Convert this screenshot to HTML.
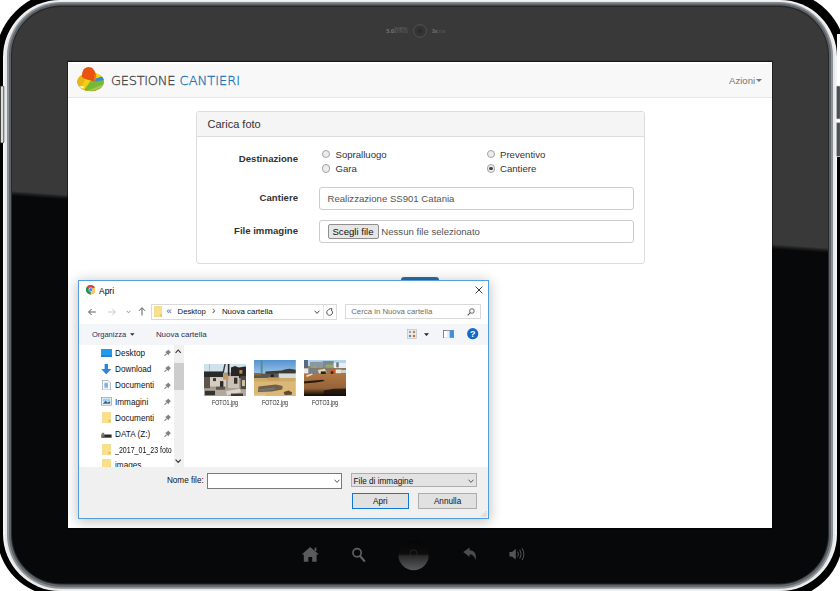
<!DOCTYPE html>
<html lang="it">
<head>
<meta charset="utf-8">
<title>Gestione Cantieri</title>
<style>
html,body{margin:0;padding:0;}
body{width:840px;height:591px;overflow:hidden;background:#fff;position:relative;font-family:"Liberation Sans",Arial,sans-serif;color:#333;}
.abs{position:absolute;}
#frame{position:absolute;left:0;top:0;width:840px;height:591px;}
#screen{position:absolute;left:68px;top:62px;width:704px;height:465.8px;background:#fff;overflow:hidden;}
/* coordinates inside #screen are page coords minus (68,62) */
.navbar{position:absolute;left:0;top:2.2px;width:704px;height:33.6px;background:#f8f8f8;border-bottom:1px solid #e7e7e7;box-sizing:border-box;}
.brand{position:absolute;left:43px;top:10.7px;font-family:"DejaVu Sans Light","DejaVu Sans",sans-serif;font-weight:200;font-size:13px;line-height:16px;white-space:nowrap;color:#474747;letter-spacing:-.3px;-webkit-text-stroke:.3px #474747;}
.brand b{position:absolute;left:68.6px;top:0;font-weight:200;color:#1c74b8;letter-spacing:0;-webkit-text-stroke:.3px #1c74b8;}
.azioni{position:absolute;left:661px;top:12.5px;font-size:9.6px;line-height:12px;color:#777;white-space:nowrap;}
.caret{display:inline-block;width:0;height:0;border-left:3px solid transparent;border-right:3px solid transparent;border-top:3px solid #777;vertical-align:middle;margin-left:1px;}
.panel{position:absolute;left:128px;top:49px;width:449px;height:153px;box-sizing:border-box;border:1px solid #ddd;border-radius:3px;background:#fff;}
.panel-h{height:23.8px;background:#f5f5f5;border-bottom:1px solid #ddd;border-radius:2px 2px 0 0;}
.panel-t{position:absolute;left:10.5px;top:6px;font-size:11px;line-height:13px;color:#333;}
.lbl{position:absolute;width:120px;text-align:right;font-weight:bold;font-size:9.6px;line-height:12px;color:#333;white-space:nowrap;}
.rad{position:absolute;width:8.6px;height:8.6px;margin:-.3px 0 0 -.3px;box-sizing:border-box;border:1px solid #a3a3a3;border-radius:50%;background:#ececec;}
.rad.on::after{content:"";position:absolute;left:1.7px;top:1.7px;width:3.2px;height:3.2px;border-radius:50%;background:#444;}
.rl{position:absolute;font-size:9.6px;line-height:12px;color:#333;white-space:nowrap;}
.inp{position:absolute;left:250.5px;width:315px;height:23px;box-sizing:border-box;border:1px solid #ccc;border-radius:3px;background:#fff;font-size:9.6px;line-height:21px;color:#555;padding-left:8px;white-space:nowrap;}
.fbtn{position:absolute;left:8px;top:3.5px;width:51px;height:15px;box-sizing:border-box;border:1px solid #8f8f8f;border-radius:2px;background:#e6e6e6;color:#111;font-size:9.6px;line-height:13px;text-align:center;}
.submit{position:absolute;left:333px;top:214.5px;width:38px;height:24px;background:#2d6da3;border-radius:3px;}

/* ---- file dialog ---- (children coords = page coords minus (79,281)) */
.dlg{position:absolute;left:10px;top:218px;width:411px;height:238.6px;box-sizing:border-box;border:1px solid #549fdb;background:#fff;box-shadow:0 2px 12px 1px rgba(0,0,0,.24);font-size:8.2px;line-height:10px;color:#111;}
.dlg div,.dlg span,.dlg svg{position:absolute;white-space:nowrap;}
.dlg .tb{left:0;top:42.5px;width:409px;height:21px;background:#f3f5f8;}
.dlg .ft{left:0;top:186px;width:409px;height:51px;background:#f0f0f0;}
.dlg .box{box-sizing:border-box;border:1px solid #d9d9d9;background:#fff;}
.dlg .sb{left:94.5px;top:64px;width:10px;height:122px;background:#f0f0f0;}
.dlg .th{left:94.5px;top:81.5px;width:10px;height:27.5px;background:#cdcdcd;}
.dlg .row{left:36px;font-size:8.2px;line-height:10px;color:#111;}
.dlg .fl{font-size:6.6px;line-height:8px;width:44px;text-align:center;color:#1a1a1a;transform:scaleX(.8);}
.dlg .btn{box-sizing:border-box;border:1px solid #adadad;background:#e1e1e1;text-align:center;height:15.6px;line-height:15.4px;}
</style>
</head>
<body>
<svg id="frame" viewBox="0 0 840 591">
  <defs>
    <clipPath id="bez"><rect x="12" y="7" width="816" height="576.5" rx="49" ry="49"/></clipPath>
    <linearGradient id="glare" gradientUnits="userSpaceOnUse" x1="0" y1="190" x2="-0.35" y2="195">
      <stop offset="0" stop-color="#393939"/><stop offset=".55" stop-color="#1a1a1b"/><stop offset="1" stop-color="#07080a"/>
    </linearGradient>
  </defs>
  <!-- black fringe -->
  <path d="M-5 61 A70 70 0 0 1 65 -9 L780 -9 A66 66 0 0 1 846 57 L843 537 A62 62 0 0 1 781 599 L59 596 A62 62 0 0 1 -3 534 Z" fill="#000"/>
  <!-- rim -->
  <rect x="3" y="0" width="834" height="591" rx="57" ry="57" fill="#f2f3f3"/>
  <rect x="5" y="1" width="830" height="589.2" rx="55.5" ry="55.5" fill="#e6e8e9"/>
  <rect x="7" y="2" width="826" height="586.8" rx="54" ry="54" fill="#8a9095"/>
  <rect x="9" y="3.5" width="822" height="583.3" rx="52" ry="52" fill="#5d6368"/>
  <rect x="11" y="5.5" width="818" height="579" rx="50" ry="50" fill="#26282a"/>
  <!-- bezel -->
  <g clip-path="url(#bez)">
    <rect x="0" y="0" width="840" height="591" fill="url(#glare)"/>
  </g>
  <rect x="67.2" y="60.8" width="705.6" height="468.6" fill="#000" fill-opacity=".55"/>

  <!-- side buttons -->
  <rect x="837" y="34" width="4" height="123" fill="#fff"/>
  <rect x="0.4" y="86" width="3.4" height="57" rx="1" fill="#dcdddd" stroke="#2a2a2a" stroke-width=".8"/>
  <rect x="836.4" y="86" width="4" height="33" rx="1" fill="#4b4f53" stroke="#c9c9c9" stroke-width=".6"/>
  <rect x="836.4" y="122.6" width="4" height="34" rx="1" fill="#4b4f53" stroke="#c9c9c9" stroke-width=".6"/>
  <!-- camera -->
  <defs>
    <linearGradient id="hb" x1="0" y1="0" x2="0" y2="1"><stop offset="0" stop-color="#050505"/><stop offset=".46" stop-color="#0c0c0c"/><stop offset=".54" stop-color="#2b2b2b"/><stop offset="1" stop-color="#5a5a5a"/></linearGradient>
  </defs>
  <circle cx="420" cy="31" r="6.3" fill="#343434" stroke="#585858" stroke-width=".8"/>
  <circle cx="420" cy="31" r="2.2" fill="#2c2c2c"/>
  <text x="386.2" y="33.2" font-family="Liberation Sans,Arial,sans-serif" font-weight="bold" font-size="5.8" fill="#777">5.0</text>
  <text x="394.6" y="30.2" font-family="Liberation Sans,Arial,sans-serif" font-size="2.9" fill="#6e6e6e" textLength="13" lengthAdjust="spacingAndGlyphs">MEGAPIXEL</text>
  <text x="394.6" y="33.2" font-family="Liberation Sans,Arial,sans-serif" font-size="2.9" fill="#6e6e6e" textLength="13" lengthAdjust="spacingAndGlyphs">AUTOFOCUS</text>
  <text x="432" y="33.2" font-family="Liberation Sans,Arial,sans-serif" font-weight="bold" font-size="5" fill="#727272">3x</text>
  <text x="438.2" y="33.2" font-family="Liberation Sans,Arial,sans-serif" font-size="3" fill="#666" textLength="7" lengthAdjust="spacingAndGlyphs">ZOOM</text>
  <!-- bottom buttons -->
  <circle cx="413.6" cy="555" r="15.2" fill="url(#hb)"/>
  <circle cx="413.6" cy="553.4" r="3.6" fill="none" stroke="#2a2a2a" stroke-width=".8"/>
  <g fill="#5a5a5a">
    <path d="M310.2 547 L319 554.6 H316.6 V561.8 H312.2 V557 H308.4 V561.8 H303.8 V554.6 H301.6 Z"/>
    <rect x="314.6" y="547.6" width="1.8" height="3.4"/>
  </g>
  <circle cx="357.1" cy="552.8" r="4.1" fill="none" stroke="#606060" stroke-width="1.7"/>
  <path d="M360.2 556.2 L364.4 561" stroke="#606060" stroke-width="2.1" stroke-linecap="round"/>
  <path d="M463.2 552 L469.6 547.4 V550.2 C474.6 550.4 476.6 554 475.6 560 C474.6 556.6 473 554.4 469.6 554.2 V557 Z" fill="#4c4c4c"/>
  <path d="M509.4 552 H512 L515.8 548.8 V559.6 L512 556.4 H509.4 Z" fill="#555"/>
  <path d="M517.6 551.6 Q519.4 554.2 517.6 556.8 M519.8 549.8 Q522.6 554.2 519.8 558.6 M522 548.2 Q525.8 554.2 522 560.2" stroke="#555" stroke-width="1" fill="none"/>
</svg>

<div id="screen">
  <div class="navbar"></div>

  <svg class="abs" style="left:8px;top:3.6px;" width="30" height="27" viewBox="0 0 30 27">
    <defs><clipPath id="lg"><ellipse cx="14.6" cy="15.5" rx="13.2" ry="9.2" transform="rotate(-1 14.6 15.5)"/></clipPath></defs>
    <ellipse cx="14.7" cy="16" rx="13.3" ry="9.3" transform="rotate(-1 14.7 16)" fill="#b98a2c"/>
    <g clip-path="url(#lg)">
      <rect x="0" y="0" width="30" height="27" fill="#f5cf12"/>
      <path d="M0 6 L12 8 L6 20 L0 20 Z" fill="#e9b416"/>
      <path d="M15.6 13.6 L30 10.4 V27 H6 Z" fill="#78b832"/>
      <path d="M14.6 14.2 L30 9 V13.6 L20 15.4 Z" fill="#2f8fd6"/>
      <path d="M8 26 L28 18 L28 21 L12 27 Z" fill="#a7cf5a" opacity=".8"/>
      <path d="M2 20 L8 20.6 L7.4 22.6 L3 22 Z" fill="#fff6c8"/>
    </g>
    <path d="M6 11.2 C5.6 4.6 8.6 1 12.4 1 C16.6 1 19.4 4.4 20 10 L20.2 14.4 C17 15.4 9.6 13.6 6 11.2 Z" fill="#e9530f"/>
    <path d="M18 8 L20 10 L20.2 14.4 L18.2 14.6 Z" fill="#ef7a28"/>
  </svg>
  <div class="brand">GESTIONE <b>CANTIERI</b></div>
  <div class="azioni">Azioni<span class="caret"></span></div>

  <div class="panel">
    <div class="panel-h"></div>
    <div class="panel-t">Carica foto</div>
  </div>
  <div class="lbl" style="left:110px;top:91px;">Destinazione</div>
  <div class="lbl" style="left:110px;top:129.9px;">Cantiere</div>
  <div class="lbl" style="left:110px;top:162.9px;">File immagine</div>

  <div class="rad" style="left:254px;top:88px;"></div><div class="rl" style="left:267.5px;top:86.5px;">Sopralluogo</div>
  <div class="rad" style="left:254px;top:102.5px;"></div><div class="rl" style="left:267.5px;top:101px;">Gara</div>
  <div class="rad" style="left:419px;top:88px;"></div><div class="rl" style="left:432px;top:86.5px;">Preventivo</div>
  <div class="rad on" style="left:419px;top:102.5px;"></div><div class="rl" style="left:432px;top:101px;">Cantiere</div>

  <div class="inp" style="top:124.7px;">Realizzazione SS901 Catania</div>
  <div class="inp" style="top:157.7px;"><div class="fbtn">Scegli file</div><span style="position:absolute;left:61.8px;top:0;">Nessun file selezionato</span></div>
  <div class="submit"></div>

  <div class="dlg">
    <!-- title -->
    <svg style="left:6.9px;top:4.2px;" width="9.4" height="9.4" viewBox="0 0 20 20">
      <circle cx="10" cy="10" r="10" fill="#db4437"/>
      <path d="M10 10 L1.3 5 A10 10 0 0 0 10 20 Z" fill="#0f9d58"/>
      <path d="M10 10 L10 20 A10 10 0 0 0 18.7 5 Z" fill="#ffcd40"/>
      <path d="M10 10 L18.7 5 A10 10 0 0 0 1.3 5 Z" fill="#db4437"/>
      <circle cx="10" cy="10" r="4.6" fill="#fff"/>
      <circle cx="10" cy="10" r="3.6" fill="#4285f4"/>
    </svg>
    <span style="left:20.1px;top:4.9px;font-size:8.4px;color:#000;">Apri</span>
    <svg style="left:395.6px;top:5px;" width="8" height="8" viewBox="0 0 8 8"><path d="M.6.6 L7.4 7.4 M7.4.6 L.6 7.4" stroke="#222" stroke-width="0.9" fill="none"/></svg>
    <!-- nav row -->
    <svg style="left:9px;top:26.5px;" width="8" height="8" viewBox="0 0 8 8"><path d="M7.8 4 H.8 M3.6 1 L.6 4 L3.6 7" stroke="#5a5a5a" stroke-width="1" fill="none"/></svg>
    <svg style="left:29px;top:26.5px;" width="8" height="8" viewBox="0 0 8 8"><path d="M.2 4 H7.2 M4.4 1 L7.4 4 L4.4 7" stroke="#c9c9c9" stroke-width="1" fill="none"/></svg>
    <svg style="left:46.6px;top:29px;" width="5" height="4" viewBox="0 0 5 4"><path d="M.6.8 L2.5 2.8 L4.4.8" stroke="#8a8a8a" stroke-width=".9" fill="none"/></svg>
    <svg style="left:58.7px;top:26.4px;" width="8" height="8.6" viewBox="0 0 8 8.6"><path d="M4 8.4 V.9 M1 3.8 L4 .7 L7 3.8" stroke="#5a5a5a" stroke-width="1" fill="none"/></svg>
    <div class="box" style="left:71.5px;top:23px;width:186px;height:15.5px;"></div>
    <svg style="left:74.6px;top:24.6px;" width="8.8" height="11.4" viewBox="0 0 8.8 11.4"><path d="M.3 .3 H8.5 V11.1 H.3 Z" fill="#fbe08a" stroke="#e9c765" stroke-width=".5"/><path d="M6.4 8 H8.5 V11.1 H6.4 Z" fill="#e9c45c"/></svg>
    <span style="left:87.6px;top:25.2px;font-size:9.5px;color:#555;">«</span>
    <span style="left:98.6px;top:26.2px;font-size:7.7px;">Desktop</span>
    <span style="left:133px;top:25px;font-size:10px;color:#444;">›</span>
    <span style="left:142.9px;top:26.2px;font-size:7.95px;">Nuova cartella</span>
    <svg style="left:235.4px;top:28.6px;" width="6" height="4.4" viewBox="0 0 6 4.4"><path d="M.5.7 L3 3.4 L5.5.7" stroke="#444" stroke-width="1" fill="none"/></svg>
    <div style="left:244px;top:24px;width:1px;height:13.5px;background:#e3e3e3;"></div>
    <svg style="left:247.2px;top:26.6px;" width="7.4" height="8" viewBox="0 0 7.4 8"><path d="M5.9 2.6 A2.9 2.9 0 1 1 3.7 1.5" stroke="#444" stroke-width=".9" fill="none"/><path d="M3.3 .2 L5.8 .4 L5.5 2.9" stroke="#444" stroke-width=".9" fill="none"/></svg>
    <div class="box" style="left:265.7px;top:23px;width:136px;height:15.3px;"></div>
    <span style="left:272.2px;top:26.2px;font-size:7.8px;color:#6d6d6d;">Cerca in Nuova cartella</span>
    <svg style="left:387.6px;top:26.6px;" width="8" height="8" viewBox="0 0 8 8"><circle cx="4.9" cy="3" r="2.3" stroke="#555" stroke-width=".9" fill="none"/><path d="M3.3 4.7 L.7 7.4" stroke="#555" stroke-width="1.1"/></svg>
    <!-- toolbar -->
    <div class="tb"></div>
    <span style="left:12.9px;top:49px;font-size:7.5px;color:#1e3257;">Organizza</span>
    <svg style="left:51.4px;top:51.6px;" width="4.6" height="3" viewBox="0 0 4.6 3"><path d="M0 .2 H4.6 L2.3 2.8 Z" fill="#1e3257"/></svg>
    <span style="left:76.9px;top:49px;font-size:7.95px;color:#1e3257;">Nuova cartella</span>
    <svg style="left:327.6px;top:48.2px;" width="10" height="10" viewBox="0 0 10 10"><rect x=".4" y=".4" width="9.2" height="9.2" fill="#f4f4f4" stroke="#b5b5b5" stroke-width=".6"/><rect x="1.8" y="1.8" width="2.4" height="2.4" fill="#9aa7b5"/><rect x="5.8" y="1.8" width="2.4" height="2.4" fill="#b9894f"/><rect x="1.8" y="5.8" width="2.4" height="2.4" fill="#6b8fb9"/><rect x="5.8" y="5.8" width="2.4" height="2.4" fill="#c96a4a"/></svg>
    <svg style="left:345.2px;top:52px;" width="5" height="3" viewBox="0 0 5 3"><path d="M0 .2 H5 L2.5 2.9 Z" fill="#222"/></svg>
    <svg style="left:364.4px;top:48.6px;" width="11" height="8.6" viewBox="0 0 11 8.6"><rect x=".4" y=".4" width="10.2" height="7.8" fill="#fff" stroke="#5f6f84" stroke-width=".8"/><rect x="3.8" y=".8" width="2.6" height="7" fill="#e6eef8"/><rect x="6.6" y=".8" width="3.8" height="7" fill="#3f8fe0"/></svg>
    <svg style="left:388.4px;top:47.4px;" width="11.4" height="11.4" viewBox="0 0 11.4 11.4"><circle cx="5.7" cy="5.7" r="5.6" fill="#1668c9"/><text x="5.7" y="8.9" text-anchor="middle" font-family="Liberation Sans,Arial,sans-serif" font-weight="bold" font-size="9" fill="#fff">?</text></svg>
    <!-- sidebar -->
    <div class="sb"></div><div class="th"></div>
    <svg style="left:96.4px;top:68.2px;" width="6.4" height="4.4" viewBox="0 0 6.4 4.4"><path d="M.6 3.8 L3.2 1 L5.8 3.8" stroke="#333" stroke-width="1.1" fill="none"/></svg>
    <svg style="left:96.4px;top:177.6px;" width="6.4" height="4.4" viewBox="0 0 6.4 4.4"><path d="M.6.6 L3.2 3.4 L5.8.6" stroke="#333" stroke-width="1.1" fill="none"/></svg>
    <div style="left:0;top:64px;width:94px;height:122px;overflow:hidden;"><div style="left:0;top:-64px;width:94px;height:200px;">
    <svg style="left:21.9px;top:67.6px;" width="11" height="8.4" viewBox="0 0 11 8.4"><rect x="0" y="0" width="11" height="7.6" fill="#1d9cf0"/><rect x="0" y="6.6" width="11" height="1.2" fill="#0f72c4"/><rect x="3.5" y="7.6" width="4" height=".8" fill="#6a7f95"/></svg>
    <span class="row" style="top:67.9px;">Desktop</span>
    <svg style="left:84.6px;top:68.2px;" width="7.4" height="7.4" viewBox="0 0 6.6 6.6"><path d="M3.6 .4 L6.2 3 L5.4 3.3 L4.3 4.6 L4.2 5.8 L.9 2.4 L2.1 2.3 L3.3 1.2 Z" fill="#808080"/><path d="M2.4 4.2 L.4 6.2" stroke="#808080" stroke-width=".9"/></svg>
    <svg style="left:22.4px;top:82.6px;" width="10.6" height="10.6" viewBox="0 0 10.6 10.6"><path d="M3.6 0 H7 V5 H10.4 L5.3 10.4 L.2 5 H3.6 Z" fill="#2d86d9"/></svg>
    <span class="row" style="top:84.1px;">Download</span>
    <svg style="left:84.6px;top:84.4px;" width="7.4" height="7.4" viewBox="0 0 6.6 6.6"><path d="M3.6 .4 L6.2 3 L5.4 3.3 L4.3 4.6 L4.2 5.8 L.9 2.4 L2.1 2.3 L3.3 1.2 Z" fill="#808080"/><path d="M2.4 4.2 L.4 6.2" stroke="#808080" stroke-width=".9"/></svg>
    <svg style="left:23px;top:98.8px;" width="8.8" height="10.4" viewBox="0 0 8.8 10.4"><path d="M.4 .4 H6 L8.4 2.8 V10 H.4 Z" fill="#fdfdfd" stroke="#8c9aa8" stroke-width=".7"/><rect x="2.4" y="2.6" width="3.6" height="5.6" fill="#9cc3ea"/><path d="M2.4 4.2 H6 M2.4 6 H6" stroke="#5d8fc4" stroke-width=".6"/></svg>
    <span class="row" style="top:100.3px;">Documenti</span>
    <svg style="left:84.6px;top:100.6px;" width="7.4" height="7.4" viewBox="0 0 6.6 6.6"><path d="M3.6 .4 L6.2 3 L5.4 3.3 L4.3 4.6 L4.2 5.8 L.9 2.4 L2.1 2.3 L3.3 1.2 Z" fill="#808080"/><path d="M2.4 4.2 L.4 6.2" stroke="#808080" stroke-width=".9"/></svg>
    <svg style="left:21.9px;top:116.1px;" width="10.8" height="8.6" viewBox="0 0 10.8 8.6"><rect x=".4" y=".4" width="10" height="7.8" fill="#f4f8fc" stroke="#8d9aa6" stroke-width=".7"/><rect x="1.6" y="1.6" width="7.6" height="3" fill="#9fd0f5"/><path d="M1.6 6.8 L4.6 3.8 L6.4 5.4 L9.2 4.2 V6.8 Z" fill="#3c5f86"/></svg>
    <span class="row" style="top:116.6px;">Immagini</span>
    <svg style="left:84.6px;top:116.9px;" width="7.4" height="7.4" viewBox="0 0 6.6 6.6"><path d="M3.6 .4 L6.2 3 L5.4 3.3 L4.3 4.6 L4.2 5.8 L.9 2.4 L2.1 2.3 L3.3 1.2 Z" fill="#808080"/><path d="M2.4 4.2 L.4 6.2" stroke="#808080" stroke-width=".9"/></svg>
    <svg style="left:23px;top:131.1px;" width="8.8" height="10.8" viewBox="0 0 8.8 10.8"><path d="M.3 .3 H8.5 V10.5 H.3 Z" fill="#fbe08a" stroke="#ecca6a" stroke-width=".5"/><path d="M6.4 7.6 H8.5 V10.5 H6.4 Z" fill="#e9c45c"/></svg>
    <span class="row" style="top:132.8px;">Documenti</span>
    <svg style="left:84.6px;top:133.1px;" width="7.4" height="7.4" viewBox="0 0 6.6 6.6"><path d="M3.6 .4 L6.2 3 L5.4 3.3 L4.3 4.6 L4.2 5.8 L.9 2.4 L2.1 2.3 L3.3 1.2 Z" fill="#808080"/><path d="M2.4 4.2 L.4 6.2" stroke="#808080" stroke-width=".9"/></svg>
    <svg style="left:21.6px;top:150.5px;" width="11" height="6" viewBox="0 0 11 6"><path d="M.3 2.4 L1.4 .8 H3.2 V2.4 Z" fill="#7a7a7a"/><rect x=".3" y="2.4" width="10.4" height="3.4" fill="#4d4d4d"/><rect x="4" y="3.2" width="6" height="1.6" fill="#1e1e1e"/><rect x="1.2" y="3.4" width="1.4" height="1" fill="#8fd14f"/></svg>
    <span class="row" style="top:148.8px;">DATA (Z:)</span>
    <svg style="left:84.6px;top:149.1px;" width="7.4" height="7.4" viewBox="0 0 6.6 6.6"><path d="M3.6 .4 L6.2 3 L5.4 3.3 L4.3 4.6 L4.2 5.8 L.9 2.4 L2.1 2.3 L3.3 1.2 Z" fill="#808080"/><path d="M2.4 4.2 L.4 6.2" stroke="#808080" stroke-width=".9"/></svg>
    <svg style="left:23px;top:162.8px;" width="8.8" height="10.8" viewBox="0 0 8.8 10.8"><path d="M.3 .3 H8.5 V10.5 H.3 Z" fill="#fbe08a" stroke="#ecca6a" stroke-width=".5"/><path d="M6.4 7.6 H8.5 V10.5 H6.4 Z" fill="#e9c45c"/></svg>
    <span class="row" style="top:164.5px;transform:scaleX(.86);transform-origin:0 50%;">_2017_01_23 foto</span>
    <svg style="left:23px;top:178.2px;" width="8.8" height="10.8" viewBox="0 0 8.8 10.8"><path d="M.3 .3 H8.5 V10.5 H.3 Z" fill="#fbe08a" stroke="#ecca6a" stroke-width=".5"/><path d="M6.4 7.6 H8.5 V10.5 H6.4 Z" fill="#e9c45c"/></svg>
    <span class="row" style="top:179.9px;">images</span>
    </div></div>

    <svg style="left:124.6px;top:82.7px;" width="42.4" height="32.2" viewBox="0 0 42.4 32" preserveAspectRatio="none">
      <defs><filter id="bl" x="-5%" y="-5%" width="110%" height="110%"><feGaussianBlur stdDeviation=".45"/></filter><clipPath id="c1"><rect width="42.4" height="32"/></clipPath></defs>
      <g clip-path="url(#c1)"><g filter="url(#bl)">
      <rect x="-2" y="-2" width="46.4" height="36" fill="#a29b8f"/>
      <rect x="-2" y="-2" width="46.4" height="10.4" fill="#cfe2ec"/>
      <rect x="-2" y="7.4" width="21" height="6" fill="#2c2b2b"/>
      <path d="M27 3.4 L31 2 L35 3.6 L41 2.4 L44 3 V14 H27 Z" fill="#2a2827"/>
      <rect x="35.4" y="6" width="3" height="3.6" fill="#b98a55"/>
      <path d="M20.6 -1 H22 L19.8 9 H18.4 Z" fill="#3a3836"/>
      <rect x="23.8" y="-1" width="1.6" height="13" fill="#232221"/>
      <rect x="5" y="-1" width=".7" height="8" fill="#9fb3bd"/>
      <rect x="0" y="13" width="6" height="11" fill="#5b5750"/>
      <rect x="6" y="13" width="16" height="9.4" fill="#d6cdbf"/>
      <rect x="24" y="12" width="11" height="12" fill="#cbc2b4"/>
      <rect x="19" y="10.6" width="5.4" height="5" fill="#c49a62"/>
      <rect x="16" y="17" width="3.4" height="6" fill="#2c2b2a"/>
      <rect x="9" y="14" width="3" height="3" fill="#3a3836"/>
      <rect x="30" y="13.6" width="3.4" height="6" fill="#34322f"/>
      <rect x="36.6" y="12" width="6" height="18" fill="#4d4842"/>
      <rect x="38" y="16" width="3" height="6" fill="#c9bfae"/>
      <rect x="-2" y="25" width="46" height="9" fill="#b0a89b"/>
      <rect x="1" y="26.6" width="10" height="4.4" fill="#353331"/>
      <path d="M22 27 L36 24.6 L37 28 L23 31 Z" fill="#ded6ca"/>
      <rect x="12" y="22.6" width="9" height="3" fill="#5b564f"/>
      <rect x="27" y="29.4" width="12" height="2.6" fill="#3c3936"/>
      </g></g>
    </svg>
    <svg style="left:175.1px;top:79.1px;" width="41.8" height="36" viewBox="0 0 42.3 36" preserveAspectRatio="none">
      <defs><linearGradient id="sky2" x1="0" y1="0" x2="0" y2="1"><stop offset="0" stop-color="#4a8bcf"/><stop offset="1" stop-color="#9cc4e4"/></linearGradient><clipPath id="c2"><rect width="42.3" height="36"/></clipPath></defs>
      <g clip-path="url(#c2)"><g filter="url(#bl)">
      <rect x="-2" y="-2" width="46.3" height="40" fill="#dcb877"/>
      <rect x="-2" y="-2" width="46.3" height="16" fill="url(#sky2)"/>
      <rect x="6.8" y="-1" width="1.9" height="14.6" fill="#4f8f9a"/><rect x="7.2" y="2" width="1.1" height="1.4" fill="#c8574a"/><rect x="7.2" y="7" width="1.1" height="1.4" fill="#c8574a"/>
      <path d="M11.6 11.4 L28 10.6 L31 9.4 L36 8.8 L44 10 V15 H11.6 Z" fill="#3b3a30"/>
      <rect x="-2" y="13.6" width="28" height="4.6" fill="#5a5955"/>
      <rect x="-2" y="13" width="9" height="2.4" fill="#8b6a3c"/>
      <rect x="25" y="13.4" width="19" height="5.6" fill="#d6dbe0"/>
      <rect x="17" y="14.4" width="3" height="2.6" fill="#1f1e1c"/>
      <rect x="-2" y="18" width="46.3" height="3.4" fill="#cfa968"/>
      <rect x="14" y="17.4" width="12" height="3" fill="#c79f5c"/>
      <path d="M4.6 26.6 L22 24.6 L29 26 L28.6 29.6 L18 31.6 L4 32 Z" fill="#6f5f49"/>
      <path d="M5 29.2 L21 27.4 L21.4 29.6 L5.4 31.4 Z" fill="#70757a"/>
      <path d="M30 32 L35 30.6 L38.6 32.4 L38 34.8 L31 35 Z" fill="#5e4a30"/>
      <rect x="-2" y="34.4" width="14" height="3" fill="#e6c98f"/>
      </g></g>
    </svg>
    <svg style="left:225.1px;top:78.9px;" width="42" height="36" viewBox="0 0 42.4 36" preserveAspectRatio="none">
      <defs><linearGradient id="gr3" x1="0" y1="0" x2="0" y2="1"><stop offset="0" stop-color="#b07a44"/><stop offset=".42" stop-color="#ad7642"/><stop offset=".76" stop-color="#94623a"/><stop offset=".86" stop-color="#4a2e18"/><stop offset=".92" stop-color="#17100c"/><stop offset="1" stop-color="#0f0b09"/></linearGradient><clipPath id="c3"><rect width="42.4" height="36"/></clipPath></defs>
      <g clip-path="url(#c3)"><g filter="url(#bl)">
      <rect x="-2" y="-2" width="46.4" height="40" fill="url(#gr3)"/>
      <rect x="-2" y="-2" width="46.4" height="8" fill="#b4d6ee"/>
      <rect x="-2" y="-2" width="6" height="11" fill="#596a80"/>
      <rect x="6" y="1.8" width="13" height="6.6" fill="#8d97a3"/>
      <rect x="19" y="1" width="11" height="7" fill="#7f8890"/>
      <rect x="9" y="5.4" width="3" height="2.6" fill="#8fae5c"/><rect x="22" y="4.6" width="8" height="3" fill="#93ac6a"/>
      <rect x="30" y="3" width="14" height="7" fill="#e9eef2"/>
      <rect x="32.6" y="2.4" width="2.4" height="5" fill="#6e7072"/>
      <rect x="-2" y="8" width="46.4" height="6" fill="#8b7a62"/>
      <rect x="0" y="8.4" width="4.6" height="5" fill="#e8e8e6"/>
      <rect x="4.6" y="8.4" width="9" height="4.6" fill="#7a8088"/>
      <path d="M14 10 L21 8.8 L23 12.6 L15 13.6 Z" fill="#e2d9b9"/>
      <rect x="17" y="11.4" width="5" height="2.6" fill="#2a241d"/>
      <rect x="26.6" y="9" width="5.4" height="4.6" fill="#d7562a"/>
      <rect x="27" y="11.4" width="2.6" height="2.4" fill="#3a2418"/>
      <rect x="32" y="9.6" width="6" height="3.6" fill="#e9e6dc"/>
      <rect x="38" y="10" width="6" height="3" fill="#cfd3d6"/>
      <path d="M2 15.6 L8 13.4 L9 14.4 L3 17 Z" fill="#e4e0d8"/>
      <path d="M-1 21.6 L10 20.4 L19 19.8 L21 21 L12 22.6 L-1 23.6 Z" fill="#2a1a10"/>
      <path d="M20 30.6 L30 28.8 L44 28.4 V38 H20 Z" fill="#17100c" opacity=".8"/>
      </g></g>
    </svg>
    <div class="fl" style="left:124px;top:117.6px;">FOTO1.jpg</div>
    <div class="fl" style="left:174px;top:117.6px;">FOTO2.jpg</div>
    <div class="fl" style="left:224px;top:117.6px;">FOTO3.jpg</div>
    <!-- FOOTER -->
    <div class="ft"></div>

    <span style="left:87.9px;top:194.6px;">Nome file:</span>
    <div class="box" style="left:127.7px;top:191.5px;width:135.8px;height:16px;border-color:#7a7a7a;"></div>
    <svg style="left:254.6px;top:198px;" width="6" height="4.4" viewBox="0 0 6 4.4"><path d="M.5.7 L3 3.4 L5.5.7" stroke="#444" stroke-width=".9" fill="none"/></svg>
    <div class="box" style="left:271.8px;top:191.7px;width:126px;height:14.8px;border-color:#adadad;background:#e3e3e3;"></div>
    <span style="left:274.6px;top:195.6px;">File di immagine</span>
    <svg style="left:388.6px;top:197.6px;" width="6" height="4.4" viewBox="0 0 6 4.4"><path d="M.5.7 L3 3.4 L5.5.7" stroke="#444" stroke-width=".9" fill="none"/></svg>
    <div class="btn" style="left:272.5px;top:212px;width:57.8px;border:1.4px solid #1177d3;line-height:15.4px;">Apri</div>
    <div class="btn" style="left:339.3px;top:212px;width:58.5px;">Annulla</div>
    <svg style="left:402px;top:229.6px;" width="6" height="6" viewBox="0 0 6 6"><g fill="#b3b3b3"><rect x="4.4" y=".4" width="1" height="1"/><rect x="2.4" y="2.4" width="1" height="1"/><rect x="4.4" y="2.4" width="1" height="1"/><rect x=".4" y="4.4" width="1" height="1"/><rect x="2.4" y="4.4" width="1" height="1"/><rect x="4.4" y="4.4" width="1" height="1"/></g></svg>
  </div>
</div>
</body>
</html>
